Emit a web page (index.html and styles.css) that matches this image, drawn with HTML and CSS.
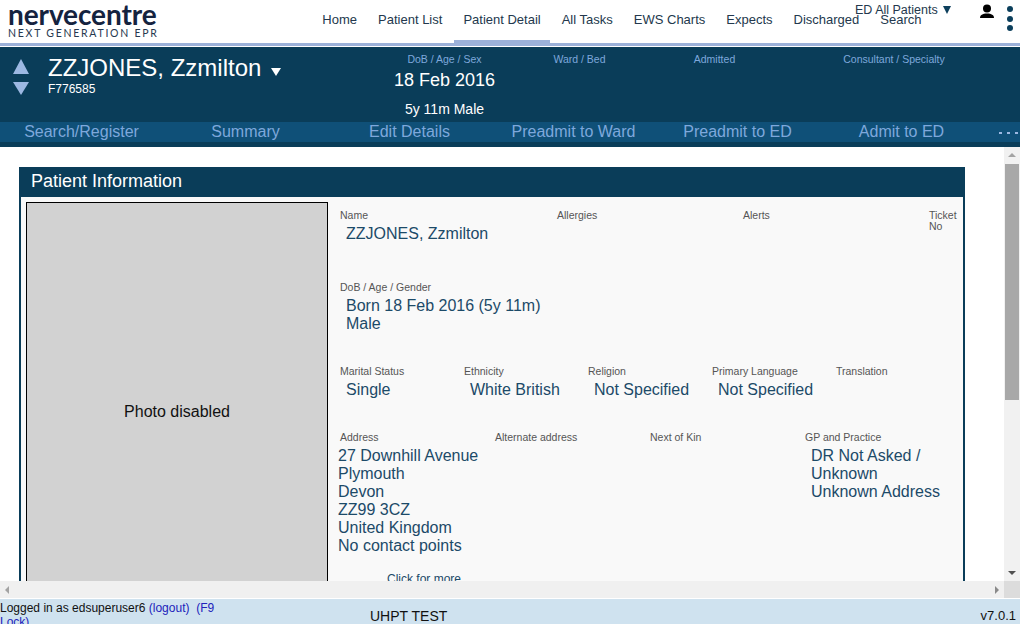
FILE: index.html
```html
<!DOCTYPE html>
<html lang="en">
<head>
    <meta charset="UTF-8">
    <title>Nervecentre - Patient Detail</title>
    <link rel="stylesheet" href="styles.css">
</head>
<body>

    <!-- Top navigation -->
    <header class="topbar">
        <div class="logo">
            <div class="logo-name">nervecentre</div>
            <div class="logo-tag">NEXT GENERATION EPR</div>
        </div>
        <nav class="mainnav">
            <a href="#">Home</a>
            <a href="#">Patient List</a>
            <a href="#" class="active">Patient Detail</a>
            <a href="#">All Tasks</a>
            <a href="#">EWS Charts</a>
            <a href="#">Expects</a>
            <a href="#">Discharged</a>
            <a href="#">Search</a>
        </nav>
        <div class="wardpick">ED All Patients <span class="wardpick-arrow"></span></div>
        <svg class="usericon" width="16" height="16" viewBox="0 0 16 16">
            <circle cx="8" cy="4.5" r="4" fill="#000"/>
            <path d="M1 14c0-3 2.5-4.6 7-4.6s7 1.6 7 4.6z" fill="#000"/>
        </svg>
        <div class="menudots"><span></span><span></span><span></span></div>
    </header>

    <!-- Patient banner -->
    <section class="banner">
        <div class="banner-arrows">
            <span class="arrow-up"></span>
            <span class="arrow-down"></span>
        </div>
        <div class="banner-name">
            <div class="patient-name">ZZJONES, Zzmilton <span class="name-caret"></span></div>
            <div class="patient-id">F776585</div>
        </div>
        <div class="banner-col">
            <div class="banner-label">DoB / Age / Sex</div>
            <div class="banner-dob">18 Feb 2016</div>
            <div class="banner-age">5y 11m Male</div>
        </div>
        <div class="banner-col">
            <div class="banner-label">Ward / Bed</div>
        </div>
        <div class="banner-col">
            <div class="banner-label">Admitted</div>
        </div>
        <div class="banner-col banner-col-wide">
            <div class="banner-label">Consultant / Specialty</div>
        </div>
    </section>

    <nav class="subnav">
        <a href="#">Search/Register</a>
        <a href="#">Summary</a>
        <a href="#">Edit Details</a>
        <a href="#">Preadmit to Ward</a>
        <a href="#">Preadmit to ED</a>
        <a href="#">Admit to ED</a>
        <span class="subnav-more"><i></i><i></i><i></i></span>
    </nav>

    <!-- Scrolling content -->
    <div class="viewport">
        <main class="content">
            <section class="panel">
                <h2 class="panel-title">Patient Information</h2>
                <div class="panel-body">
                    <div class="photo">Photo disabled</div>
                    <div class="details">
                        <div class="row row-name">
                            <div class="field f-name">
                                <div class="label">Name</div>
                                <div class="value">ZZJONES, Zzmilton</div>
                            </div>
                            <div class="field f-allergies"><div class="label">Allergies</div></div>
                            <div class="field f-alerts"><div class="label">Alerts</div></div>
                            <div class="field f-ticket">
                                <div class="label">Ticket</div>
                                <div class="label">No</div>
                            </div>
                        </div>
                        <div class="row row-dob">
                            <div class="field">
                                <div class="label">DoB / Age / Gender</div>
                                <div class="value">Born 18 Feb 2016 (5y 11m)<br>Male</div>
                            </div>
                        </div>
                        <div class="row row-social">
                            <div class="field">
                                <div class="label">Marital Status</div>
                                <div class="value">Single</div>
                            </div>
                            <div class="field">
                                <div class="label">Ethnicity</div>
                                <div class="value">White British</div>
                            </div>
                            <div class="field">
                                <div class="label">Religion</div>
                                <div class="value">Not Specified</div>
                            </div>
                            <div class="field">
                                <div class="label">Primary Language</div>
                                <div class="value">Not Specified</div>
                            </div>
                            <div class="field">
                                <div class="label">Translation</div>
                            </div>
                        </div>
                        <div class="row row-address">
                            <div class="field">
                                <div class="label">Address</div>
                                <div class="value value-flush">27 Downhill Avenue<br>Plymouth<br>Devon<br>ZZ99 3CZ<br>United Kingdom<br>No contact points</div>
                                <a class="more" href="#">Click for more</a>
                            </div>
                            <div class="field"><div class="label">Alternate address</div></div>
                            <div class="field"><div class="label">Next of Kin</div></div>
                            <div class="field">
                                <div class="label">GP and Practice</div>
                                <div class="value">DR Not Asked /<br>Unknown<br>Unknown Address</div>
                            </div>
                        </div>
                    </div>
                </div>
            </section>
        </main>
        <div class="vscroll">
            <span class="sb-up"></span>
            <div class="vtrack"><div class="vthumb"></div></div>
            <span class="sb-down"></span>
        </div>
    </div>
    <div class="hscroll">
        <div class="htrack">
            <span class="sb-left"></span>
            <span class="sb-right"></span>
        </div>
        <div class="sb-corner"></div>
    </div>

    <footer class="statusbar">
        <div class="login">Logged in as edsuperuser6 <a href="#">(logout)</a> &nbsp;<a href="#">(F9 Lock)</a></div>
        <div class="site">UHPT TEST</div>
        <div class="version">v7.0.1</div>
    </footer>

</body>
</html>
```

FILE: styles.css
```css
/* General */
html, body {
    margin: 0;
    padding: 0;
    height: 100%;
    overflow: hidden;
}

body {
    display: flex;
    flex-direction: column;
    height: 624px;
    background: #fff;
    font-family: "Liberation Sans", Arial, sans-serif;
}

a {
    text-decoration: none;
}

/* Top navigation */
.topbar {
    position: relative;
    display: flex;
    justify-content: space-between;
    flex: 0 0 43px;
    height: 43px;
    border-bottom: 3px solid #9cb1d9;
    margin-bottom: 1px;
}

.logo {
    padding: 1px 0 0 8px;
    color: #15233f;
}

.logo-name {
    font-family: Lato, sans-serif;
    font-size: 28px;
    font-weight: 700;
    line-height: 26px;
    letter-spacing: -0.1px;
}

.logo-tag {
    font-family: Lato, sans-serif;
    font-size: 10.5px;
    line-height: 12px;
    letter-spacing: 1.75px;
    color: #26384f;
}

.mainnav {
    display: flex;
    margin-right: 88px;
}

.mainnav a {
    position: relative;
    padding: 12px 10.5px 0;
    font-size: 13px;
    line-height: 15px;
    color: #23384d;
}

.mainnav a.active::after {
    content: "";
    position: absolute;
    left: 1px;
    right: 1px;
    bottom: 0;
    height: 3px;
    background: #9cb1d9;
}

.wardpick {
    position: absolute;
    left: 855px;
    top: 3px;
    font-size: 12.5px;
    line-height: 15px;
    color: #23384d;
}

.wardpick-arrow {
    display: inline-block;
    margin-left: 2px;
    border-left: 4px solid transparent;
    border-right: 4px solid transparent;
    border-top: 8px solid #0d3f5c;
}

.usericon {
    position: absolute;
    left: 979px;
    top: 4px;
}

.menudots {
    position: absolute;
    left: 1007px;
    top: 6px;
    display: flex;
    flex-direction: column;
    gap: 3.5px;
}

.menudots span {
    width: 6px;
    height: 6px;
    border-radius: 50%;
    background: #0b3f5c;
}

/* Patient banner */
.banner {
    display: flex;
    flex: 0 0 75px;
    background: #0a3d59;
    color: #fff;
}

.banner-arrows {
    display: flex;
    flex-direction: column;
    gap: 8px;
    width: 48px;
    padding: 12px 0 0 13px;
    box-sizing: border-box;
}

.arrow-up {
    width: 0;
    border-left: 8.5px solid transparent;
    border-right: 8.5px solid transparent;
    border-bottom: 15px solid #9cb8e2;
}

.arrow-down {
    width: 0;
    border-left: 8px solid transparent;
    border-right: 8px solid transparent;
    border-top: 13px solid #9cb8e2;
}

.banner-name {
    width: 329px;
    padding-top: 7px;
}

.patient-name {
    font-size: 24px;
    line-height: 28px;
}

.name-caret {
    display: inline-block;
    margin-left: 3px;
    border-left: 5px solid transparent;
    border-right: 5px solid transparent;
    border-top: 8px solid #fff;
}

.patient-id {
    font-size: 12px;
    line-height: 14px;
    margin-top: 0;
}

.banner-col {
    width: 135px;
    padding-top: 6px;
    text-align: center;
}

.banner-col-wide {
    width: 224px;
}

.banner-label {
    font-size: 10.5px;
    line-height: 12px;
    color: #7ea8dc;
}

.banner-dob {
    margin-top: 5px;
    font-size: 18px;
    line-height: 21px;
}

.banner-age {
    margin-top: 10px;
    font-size: 14px;
    line-height: 16px;
}

.subnav {
    position: relative;
    display: grid;
    grid-template-columns: repeat(6, 164px);
    flex: 0 0 20px;
    margin-left: 0;
    padding-left: 0;
    height: 20px;
    border-bottom: 5px solid #0a3d59;
    background: #0f5078;
    text-indent: -1px;
}

.subnav a {
    font-size: 16px;
    line-height: 20px;
    text-align: center;
    color: #7ea8dc;
}

.subnav-more {
    position: absolute;
    left: 999px;
    top: 10px;
    display: flex;
    gap: 5px;
}

.subnav-more i {
    width: 3px;
    height: 2px;
    background: #9cb8e2;
}

/* Scrolling content */
.viewport {
    display: flex;
    flex: 1;
    min-height: 0;
}

.content {
    flex: 1;
    padding: 20px 39px 0 19px;
    overflow: hidden;
}

.panel {
    border: 2px solid #0a3d59;
    border-top: 0;
    border-bottom: 0;
    height: 600px;
    background: #f9f9f9;
}

.panel-title {
    margin: 0 -2px;
    padding-left: 12px;
    height: 30px;
    background: #0a3d59;
    font-size: 18px;
    font-weight: 400;
    line-height: 28px;
    color: #fff;
}

.panel-body {
    display: flex;
    padding: 5px 0 0 5px;
}

.photo {
    display: flex;
    align-items: center;
    justify-content: center;
    box-sizing: border-box;
    width: 302px;
    height: 420px;
    border: 1px solid #000;
    background: #d2d2d2;
    font-size: 16px;
    color: #111;
}

.details {
    flex: 1;
    padding: 8px 0 0 12px;
    color: #1c4a68;
}

.row {
    display: flex;
}

.row-name {
    height: 72px;
}

.row-dob {
    height: 84px;
}

.row-social {
    height: 66px;
}

.row-social .field {
    width: 124px;
}

.row-address .field {
    width: 155px;
}

.f-name {
    width: 217px;
}

.f-allergies,
.f-alerts {
    width: 186px;
}

.label {
    font-size: 10.5px;
    line-height: 11px;
    color: #555;
}

.value {
    margin: 4px 0 0 6px;
    font-size: 16px;
    line-height: 18px;
    white-space: nowrap;
    color: #1c4a68;
}

.value-flush {
    margin-left: -2px;
}

.more {
    display: block;
    margin: 17px 0 0 47px;
    font-size: 12px;
    line-height: 14px;
    white-space: nowrap;
    color: #1c4a68;
}

/* Fake scrollbars */
.vscroll {
    display: flex;
    flex-direction: column;
    align-items: center;
    flex: 0 0 16px;
    background: #f1f1f1;
}

.vtrack {
    flex: 1;
    width: 100%;
}

.vthumb {
    width: 14px;
    height: 236px;
    margin: 0 1px;
    background: #a8a8a8;
}

.sb-up,
.sb-down {
    flex: 0 0 0;
    border-left: 4px solid transparent;
    border-right: 4px solid transparent;
}

.sb-up {
    margin: 6px 0 7px;
    border-bottom: 4px solid #a3a3a3;
}

.sb-down {
    margin: 7px 0 6px;
    border-top: 4px solid #505050;
}

.hscroll {
    display: flex;
    flex: 0 0 17px;
    margin-bottom: 1px;
}

.htrack {
    display: flex;
    align-items: center;
    justify-content: space-between;
    flex: 1;
    padding: 0 5px;
    background: #f0f0f0;
}

.sb-left,
.sb-right {
    border-top: 4px solid transparent;
    border-bottom: 4px solid transparent;
}

.sb-left {
    border-right: 4px solid #a3a3a3;
}

.sb-right {
    border-left: 4px solid #8a8a8a;
}

.sb-corner {
    flex: 0 0 16px;
    background: #dcdcdc;
}

/* Status bar */
.statusbar {
    display: flex;
    flex: 0 0 25px;
    overflow: hidden;
    background: #cfe2ef;
    font-size: 12px;
    color: #111;
}

.login {
    width: 243px;
    line-height: 14px;
    padding-top: 2px;
}

.login a {
    color: #2222bb;
}

.site {
    margin-left: 127px;
    padding-top: 9px;
    font-size: 14px;
    line-height: 16px;
}

.version {
    margin-left: auto;
    padding: 9px 4px 0 0;
    font-size: 13px;
    line-height: 16px;
}
```
